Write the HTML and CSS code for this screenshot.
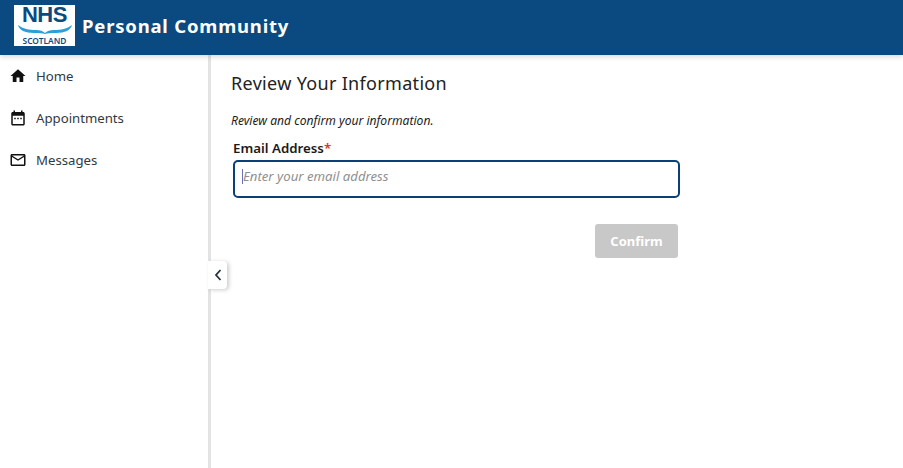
FILE: index.html
```html
<!DOCTYPE html>
<html lang="en">
<head>
<meta charset="utf-8">
<title>Personal Community</title>
<link rel="stylesheet" href="styles.css">
</head>
<body>
<header class="topbar">
  <div class="logo">
    <span class="logo-nhs">NHS</span>
    <svg class="logo-wave" viewBox="0 0 54 10" aria-hidden="true"><path d="M0 1C5 5 11 6 18 6C22 6 25 7 27 9C29 7 32 6 36 6C43 6 49 5 54 1C53 6 47 9 38 9C33 9 29 9 27 10C25 9 21 9 16 9C7 9 1 6 0 1Z" fill="#2a9fd8"/></svg>
    <span class="logo-scot">SCOTLAND</span>
  </div>
  <div class="brand">Personal Community</div>
</header>
<div class="shell">
  <nav class="sidebar">
    <a class="nav-item"><svg class="nav-icon" viewBox="0 0 24 24"><path d="M10 20v-6h4v6h5v-8h3L12 3 2 12h3v8z"/></svg><span>Home</span></a>
    <a class="nav-item"><svg class="nav-icon" viewBox="0 0 24 24"><path d="M19 4h-1V2h-2v2H8V2H6v2H5C3.900 4 3 4.900 3 6v14c0 1.100.9 2 2 2h14c1.100 0 2-.9 2-2V6c0-1.100-.9-2-2-2zm0 16H5V9h14v11zM7 11.500h2v2H7zm4 0h2v2h-2zm4 0h2v2h-2z"/></svg><span>Appointments</span></a>
    <a class="nav-item"><svg class="nav-icon" viewBox="0 0 24 24"><path d="M20 4H4c-1.100 0-2 .9-2 2v12c0 1.100.9 2 2 2h16c1.100 0 2-.9 2-2V6c0-1.100-.9-2-2-2zm0 14H4V8l8 5 8-5v10zm-8-7L4 6h16l-8 5z"/></svg><span>Messages</span></a>
    <button class="collapse" aria-label="Collapse"><svg viewBox="0 0 10 14"><path d="M7.500 2L3 7l4.500 5" fill="none" stroke="#26323f" stroke-width="1.800"/></svg></button>
  </nav>
  <main class="content">
    <h1 class="title">Review Your Information</h1>
    <p class="intro">Review and confirm your information.</p>
    <form class="form">
      <label class="label" for="email">Email Address<span class="req">*</span></label>
      <div class="input-wrap">
        <input class="input" id="email" type="text" placeholder="Enter your email address">
        <span class="caret"></span>
      </div>
      <div class="actions"><button class="confirm" type="button" disabled>Confirm</button></div>
    </form>
  </main>
</div>
</body>
</html>
```
FILE: styles.css
```css
* { box-sizing: border-box; }
html, body { height: 100%; }
body {
  margin: 0;
  height: 468px;
  overflow: hidden;
  display: flex;
  flex-direction: column;
  background: #fff;
  font-family: "Noto Sans", "Open Sans", sans-serif;
  color: #1c1c1c;
}
.topbar {
  height: 55px;
  flex: none;
  background: #0b4a80;
  display: flex;
  align-items: flex-start;
  padding: 5px 0 0 14px;
  box-shadow: 0 2px 5px rgba(0, 0, 0, .15);
  position: relative;
  z-index: 2;
}
.logo {
  width: 61px;
  height: 41px;
  background: #fff;
  display: flex;
  flex-direction: column;
  align-items: center;
}
.logo-nhs {
  font-family: "Liberation Sans", sans-serif;
  font-weight: 700;
  font-size: 22px;
  line-height: 20px;
  color: #0b4a80;
  letter-spacing: -.4px;
}
.logo-wave { width: 54px; height: 10px; flex: none; margin-top: -1px; }
.logo-scot {
  font-family: "Noto Sans", sans-serif;
  font-weight: 600;
  font-size: 8.400px;
  line-height: 10px;
  margin-top: 2px;
  color: #0b4a80;
}
.brand {
  margin: 8px 0 0 7px;
  color: #fff;
  font-weight: 700;
  font-size: 18.500px;
  line-height: 25px;
  letter-spacing: .8px;
}
.shell { flex: 1; display: flex; min-height: 0; }
.sidebar {
  width: 211px;
  flex: none;
  border-right: 3px solid #e3e3e3;
  position: relative;
}
.nav-item {
  height: 42px;
  display: flex;
  align-items: center;
  padding-left: 9px;
  font-size: 13.200px;
  color: #303a44;
}
.nav-icon { width: 18px; height: 18px; margin-right: 9px; fill: #111; flex: none; }
.collapse {
  position: absolute;
  left: 208px;
  top: 206px;
  width: 19px;
  height: 28px;
  padding: 0 0 0 5px;
  border: 0;
  border-radius: 0 4px 4px 0;
  background: #fff;
  box-shadow: 2px 1px 4px rgba(0, 0, 0, .2);
  display: flex;
  align-items: center;
}
.collapse svg { width: 10px; height: 14px; }
.content { flex: 1; padding: 14px 0 0 20px; }
.title {
  margin: 0;
  font-weight: 400;
  font-size: 18px;
  line-height: 28px;
  letter-spacing: .32px;
  color: #222;
}
.intro {
  margin: 15px 0 0;
  font-style: italic;
  font-size: 12.100px;
  line-height: 18px;
}
.form { width: 449px; margin-top: 8px; padding-left: 2px; }
.label {
  display: block;
  font-weight: 600;
  font-size: 13.300px;
  line-height: 20px;
  color: #1a1a1a;
}
.req { color: #e0352b; }
.input-wrap { position: relative; width: 447px; margin-top: 2px; }
.input {
  display: block;
  width: 447px;
  height: 38px;
  padding: 0 8px 7px;
  border: 2px solid #0b3f78;
  border-radius: 5px;
  outline: 0;
  font-family: inherit;
  font-size: 13.200px;
  font-style: italic;
  background: #fff;
}
.input::placeholder { color: #8f8f8f; opacity: 1; }
.caret {
  position: absolute;
  left: 9px;
  top: 9px;
  width: 1px;
  height: 15px;
  background: #6a70b0;
}
.actions { display: flex; justify-content: flex-end; margin-top: 26px; padding-right: 2px; }
.confirm {
  width: 83px;
  height: 34px;
  border: 0;
  border-radius: 3px;
  background: #c8c8c8;
  color: #fff;
  font-family: inherit;
  font-weight: 700;
  font-size: 13px;
}
```
